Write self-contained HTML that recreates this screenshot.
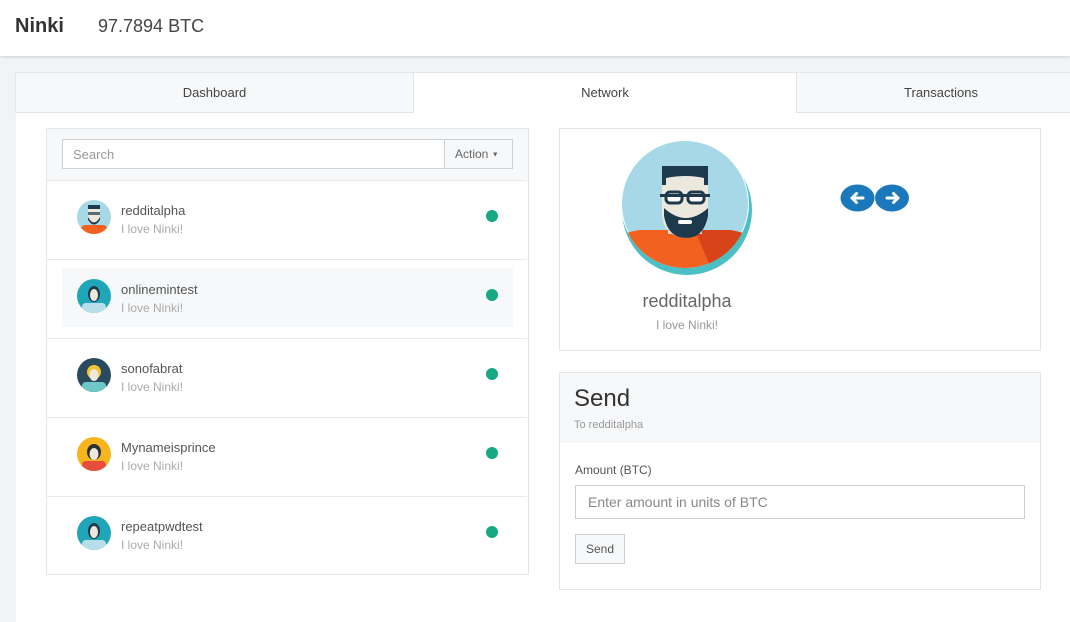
<!DOCTYPE html><html><head><meta charset="utf-8"><style>
*{box-sizing:border-box;margin:0;padding:0}
body{width:1070px;height:622px;overflow:hidden;background:#f2f3f5;font-family:"Liberation Sans",sans-serif;color:#333;position:relative}
.a{position:absolute;white-space:nowrap}
.hdr{left:0;top:0;width:1070px;height:56px;background:#fff;box-shadow:0 1px 3px rgba(0,0,0,.15)}
.tab{top:72px;height:41px;border:1px solid #e3e5e8;background:#f7f8f9;font-size:13px;color:#444;text-align:center;line-height:40px}
.row{left:47px;width:480px;height:79px;border-top:1px solid #e8e9eb}
.nm{font-size:13px;color:#555}.sb{font-size:12px;color:#aaa}
.dot{width:12px;height:12px;border-radius:50%;background:#17a983}
</style></head><body>
<div class="a hdr"></div>
<div class="a" style="left:15px;top:15px;font-size:20px;font-weight:bold;color:#333">Ninki</div>
<div class="a" style="left:98px;top:16px;font-size:18px;color:#444">97.7894 BTC</div>
<div class="a" style="left:16px;top:112px;width:1054px;height:510px;background:#fff"></div>
<div class="a tab" style="left:15px;width:399px">Dashboard</div>
<div class="a tab" style="left:413px;width:384px;background:#fff;border-bottom-color:#fff">Network</div>
<div class="a tab" style="left:796px;width:290px">Transactions</div>
<div class="a" style="left:46px;top:128px;width:483px;height:447px;border:1px solid #e3e5e8;background:#fff"></div>
<div class="a" style="left:47px;top:129px;width:481px;height:51px;background:#f7f8fa"></div>
<div class="a" style="left:62px;top:139px;width:451px;height:30px;border:1px solid #ccd0d5;background:#fff;font-size:13px;color:#999;padding:7px 10px">Search</div>
<div class="a" style="left:444px;top:139px;width:69px;height:30px;border:1px solid #ccd0d5;background:#f7f8f9;font-size:12px;color:#666;padding:7px 10px">Action <span style="font-size:7px;vertical-align:middle">▼</span></div>
<div class="a" style="left:62px;top:268px;width:451px;height:59px;background:#f7f8fa"></div>

<div class="a row" style="top:180px"></div><div class="a row" style="top:259px"></div><div class="a row" style="top:338px"></div><div class="a row" style="top:417px"></div><div class="a row" style="top:496px"></div>

<svg class="a" style="left:77px;top:200px" width="34" height="34" viewBox="0 0 34 34"><clipPath id="c1"><circle cx="17" cy="17" r="17"/></clipPath><g clip-path="url(#c1)"><rect width="34" height="34" fill="#a6d8e7"/><rect x="4" y="25" width="26" height="12" rx="4" fill="#f2611f"/><rect x="11" y="7" width="12" height="16" rx="3" fill="#ece8de"/><rect x="11" y="5" width="12" height="4" fill="#1c3a4c"/><path d="M11 17 Q17 28 23 17 V20 Q17 29 11 20Z" fill="#1c3a4c"/><rect x="11" y="12" width="12" height="3" fill="#1c3a4c" opacity=".7"/></g></svg>
<svg class="a" style="left:77px;top:279px" width="34" height="34" viewBox="0 0 34 34"><clipPath id="c2"><circle cx="17" cy="17" r="17"/></clipPath><g clip-path="url(#c2)"><rect width="34" height="34" fill="#1fa6b8"/><rect x="5" y="24" width="24" height="12" rx="4" fill="#b8dfe9"/><ellipse cx="17" cy="15" rx="6" ry="8" fill="#203a4c"/><ellipse cx="17" cy="16" rx="4" ry="6" fill="#eee8dc"/></g></svg>
<svg class="a" style="left:77px;top:358px" width="34" height="34" viewBox="0 0 34 34"><clipPath id="c3"><circle cx="17" cy="17" r="17"/></clipPath><g clip-path="url(#c3)"><rect width="34" height="34" fill="#2a4a5f"/><rect x="5" y="24" width="24" height="12" rx="4" fill="#6ec7c8"/><ellipse cx="17" cy="14" rx="7" ry="7" fill="#f4c430"/><ellipse cx="17" cy="17" rx="4.5" ry="6" fill="#eee8dc"/></g></svg>
<svg class="a" style="left:77px;top:437px" width="34" height="34" viewBox="0 0 34 34"><clipPath id="c4"><circle cx="17" cy="17" r="17"/></clipPath><g clip-path="url(#c4)"><rect width="34" height="34" fill="#f6b51d"/><rect x="5" y="24" width="24" height="12" rx="4" fill="#e64d3c"/><ellipse cx="17" cy="15" rx="7" ry="8" fill="#2b2f36"/><ellipse cx="17" cy="17" rx="4.5" ry="6" fill="#eee8dc"/></g></svg>
<svg class="a" style="left:77px;top:516px" width="34" height="34" viewBox="0 0 34 34"><clipPath id="c5"><circle cx="17" cy="17" r="17"/></clipPath><g clip-path="url(#c5)"><rect width="34" height="34" fill="#1fa6b8"/><rect x="5" y="24" width="24" height="12" rx="4" fill="#b8dfe9"/><ellipse cx="17" cy="15" rx="6" ry="8" fill="#203a4c"/><ellipse cx="17" cy="16" rx="4" ry="6" fill="#eee8dc"/></g></svg>

<div class="a nm" style="left:121px;top:203px">redditalpha</div><div class="a sb" style="left:121px;top:222px">I love Ninki!</div>
<div class="a nm" style="left:121px;top:282px">onlinemintest</div><div class="a sb" style="left:121px;top:301px">I love Ninki!</div>
<div class="a nm" style="left:121px;top:361px">sonofabrat</div><div class="a sb" style="left:121px;top:380px">I love Ninki!</div>
<div class="a nm" style="left:121px;top:440px">Mynameisprince</div><div class="a sb" style="left:121px;top:459px">I love Ninki!</div>
<div class="a nm" style="left:121px;top:519px">repeatpwdtest</div><div class="a sb" style="left:121px;top:538px">I love Ninki!</div>
<div class="a dot" style="left:486px;top:210px"></div><div class="a dot" style="left:486px;top:289px"></div><div class="a dot" style="left:486px;top:368px"></div><div class="a dot" style="left:486px;top:447px"></div><div class="a dot" style="left:486px;top:526px"></div>

<div class="a" style="left:559px;top:128px;width:482px;height:223px;border:1px solid #e3e5e8;background:#fff"></div>
<svg class="a" style="left:620px;top:140px" width="136" height="140" viewBox="0 0 136 140"><circle cx="67" cy="70" r="65" fill="#4bbfc3"/><clipPath id="cb"><circle cx="65" cy="64" r="64"/></clipPath><circle cx="65" cy="64" r="64" fill="#fff"/><g clip-path="url(#cb)"><circle cx="65" cy="64" r="63" fill="#a6d8e7"/><path d="M0 150 V100 Q0 93 20 90 L110 90 Q130 93 130 100 V150Z" fill="#f2611f"/><path d="M75 90 L110 90 Q130 93 130 100 V150 L100 150 Z" fill="#d9431a"/><rect x="48" y="70" width="34" height="24" fill="#d8d2c2"/><path d="M42 40 Q42 28 66 28 Q88 28 88 40 V72 Q88 96 66 98 Q42 96 42 72Z" fill="#ece8de"/><path d="M42 26 H88 V45 H84 V38 Q66 34 46 38 V45 H42Z" fill="#1c3a4c"/><path d="M44 68 Q66 88 88 68 V76 Q84 98 66 98 Q48 98 44 76Z" fill="#1c3a4c"/><rect x="58" y="80" width="14" height="4" rx="2" fill="#fff"/><rect x="46" y="52" width="16" height="11" rx="4" fill="#fff" stroke="#1c3a4c" stroke-width="3"/><rect x="68" y="52" width="16" height="11" rx="4" fill="#fff" stroke="#1c3a4c" stroke-width="3"/><rect x="40" y="54" width="50" height="3" fill="#1c3a4c"/></g></svg>
<div class="a" style="left:559px;top:291px;width:256px;text-align:center;font-size:18px;color:#666">redditalpha</div>
<div class="a" style="left:559px;top:318px;width:256px;text-align:center;font-size:12px;color:#999">I love Ninki!</div>
<svg class="a" style="left:840px;top:184px" width="70" height="28"><ellipse cx="17.5" cy="14" rx="17" ry="13.5" fill="#1c78bd"/><ellipse cx="52" cy="14" rx="17" ry="13.5" fill="#1c78bd"/><path d="M12 14 H23 M12 14 L16.5 9.5 M12 14 L16.5 18.5" stroke="#fff" stroke-width="3" fill="none" stroke-linecap="round"/><path d="M58 14 H47 M58 14 L53.5 9.5 M58 14 L53.5 18.5" stroke="#fff" stroke-width="3" fill="none" stroke-linecap="round"/></svg>

<div class="a" style="left:559px;top:372px;width:482px;height:218px;border:1px solid #e3e5e8;background:#fff"></div>
<div class="a" style="left:560px;top:373px;width:480px;height:70px;background:#f7f8fa"></div>
<div class="a" style="left:574px;top:385px;font-size:24px;color:#333">Send</div>
<div class="a" style="left:574px;top:419px;font-size:11px;color:#999">To redditalpha</div>
<div class="a" style="left:575px;top:463px;font-size:12px;color:#555">Amount (BTC)</div>
<div class="a" style="left:575px;top:485px;width:450px;height:34px;border:1px solid #ccd0d5;font-size:14px;color:#888;padding:8px 12px">Enter amount in units of BTC</div>
<div class="a" style="left:575px;top:534px;width:50px;height:30px;border:1px solid #ccd0d5;background:#f7f8f9;font-size:12px;color:#555;text-align:center;line-height:28px">Send</div>
</body></html>
